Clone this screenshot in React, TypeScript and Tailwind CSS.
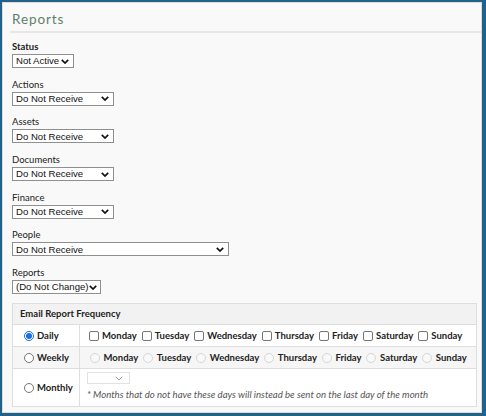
import React from "react";

const labelFont = { fontFamily: "Lato, 'Noto Sans', sans-serif" };
const selectFont = { fontFamily: "'Liberation Sans', Arial, sans-serif" };

function Chevron({ light = false }: { light?: boolean }) {
  return (
    <svg width="8" height="5" viewBox="0 0 8 5" className="shrink-0">
      <polyline
        points="0.8,0.8 4,4 7.2,0.8"
        fill="none"
        stroke={light ? "#9a9a9a" : "#111"}
        strokeWidth={light ? 1 : 1.7}
      />
    </svg>
  );
}

function FakeSelect({ value, width }: { value: string; width: string }) {
  return (
    <div
      className={`${width} h-[14px] flex items-center justify-between bg-white border border-[#8f8f8f] pl-[3px] pr-[4px] text-[9.6px] text-[#111] leading-none whitespace-nowrap`}
      style={selectFont}
    >
      <span>{value}</span>
      <Chevron />
    </div>
  );
}

function Field({ label, value, width, bold = false }: { label: string; value: string; width: string; bold?: boolean }) {
  return (
    <div className="flex flex-col">
      <div
        className={`h-[12px] mb-[1px] leading-[12px] text-[9.5px] text-[#222] ${bold ? "font-bold" : ""}`}
        style={labelFont}
      >
        {label}
      </div>
      <FakeSelect value={value} width={width} />
    </div>
  );
}

function Checkbox() {
  return <span className="w-[10px] h-[10px] shrink-0 rounded-[2px] border border-[#767676] bg-white" />;
}

function Radio({ checked = false, disabled = false }: { checked?: boolean; disabled?: boolean }) {
  if (checked) {
    return (
      <span className="w-[10px] h-[10px] shrink-0 rounded-full border border-[#1a6fe0] bg-white flex items-center justify-center">
        <span className="w-[6px] h-[6px] rounded-full bg-[#1a6fe0]" />
      </span>
    );
  }
  return (
    <span
      className={`w-[10px] h-[10px] shrink-0 rounded-full border ${
        disabled ? "border-[#d6d6d6] bg-[#f9f9f9]" : "border-[#767676] bg-white"
      }`}
    />
  );
}

const days = ["Monday", "Tuesday", "Wednesday", "Thursday", "Friday", "Saturday", "Sunday"];

export default function App() {
  return (
    <div className="w-[486px] h-[416px] border-t-2 border-l-2 border-r-4 border-b-[3px] border-[#21628a] bg-[#21628a]">
      <div className="h-full border border-[#dcdcdc] bg-[#f9f9f9] flex flex-col">
        {/* Heading */}
        <div
          className="mt-[8px] ml-[9px] h-[16px] leading-[16px] text-[13.5px] tracking-[0.9px] text-[#5f7f69]"
          style={labelFont}
        >
          Reports
        </div>
        <div className="mt-[4px] ml-[7px] h-[2px] bg-[#e7e7e7]" />

        {/* Fields */}
        <div className="mt-[8px] ml-[9px] flex flex-col gap-[10.7px]">
          <Field label="Status" value="Not Active" width="w-[62px]" bold />
          <Field label="Actions" value="Do Not Receive" width="w-[102px]" />
          <Field label="Assets" value="Do Not Receive" width="w-[102px]" />
          <Field label="Documents" value="Do Not Receive" width="w-[102px]" />
          <Field label="Finance" value="Do Not Receive" width="w-[102px]" />
          <Field label="People" value="Do Not Receive" width="w-[217px]" />
          <Field label="Reports" value="(Do Not Change)" width="w-[89px]" />
        </div>

        {/* Frequency table */}
        <div
          className="mt-[9px] ml-[9px] w-[465px] border border-[#dedede] text-[9.5px] font-bold text-[#222]"
          style={labelFont}
        >
          <div className="h-[21px] flex items-center pl-[7px] bg-[#f2f2f2] border-b border-[#dedede]">
            Email Report Frequency
          </div>

          <div className="h-[22px] flex bg-white border-b border-[#dedede]">
            <div className="w-[67px] shrink-0 flex items-center gap-[3px] pl-[11px] border-r border-[#dedede]">
              <Radio checked />
              <span>Daily</span>
            </div>
            <div className="flex items-center pl-[9px] gap-[5px]">
              {days.map((d) => (
                <span key={d} className="flex items-center gap-[3px]">
                  <Checkbox />
                  <span>{d}</span>
                </span>
              ))}
            </div>
          </div>

          <div className="h-[22px] flex bg-[#f6f6f6] border-b border-[#dedede]">
            <div className="w-[67px] shrink-0 flex items-center gap-[3px] pl-[11px] border-r border-[#dedede]">
              <Radio />
              <span>Weekly</span>
            </div>
            <div className="flex items-center pl-[10px] gap-[5px]">
              {days.map((d) => (
                <span key={d} className="flex items-center gap-[3.5px]">
                  <Radio disabled />
                  <span>{d}</span>
                </span>
              ))}
            </div>
          </div>

          <div className="h-[37px] flex bg-white">
            <div className="w-[67px] shrink-0 flex items-center gap-[3px] pl-[11px] border-r border-[#dedede]">
              <Radio />
              <span>Monthly</span>
            </div>
            <div className="flex flex-col pl-[7px] pt-[3px]">
              <div className="w-[43px] h-[12px] bg-white border border-[#e2e2e2] flex items-center justify-end pr-[6px]">
                <Chevron light />
              </div>
              <div className="mt-[5px] leading-[12px] italic font-normal text-[9.6px] text-[#555]">
                * Months that do not have these days will instead be sent on the last day of the month
              </div>
            </div>
          </div>
        </div>
      </div>
    </div>
  );
}
